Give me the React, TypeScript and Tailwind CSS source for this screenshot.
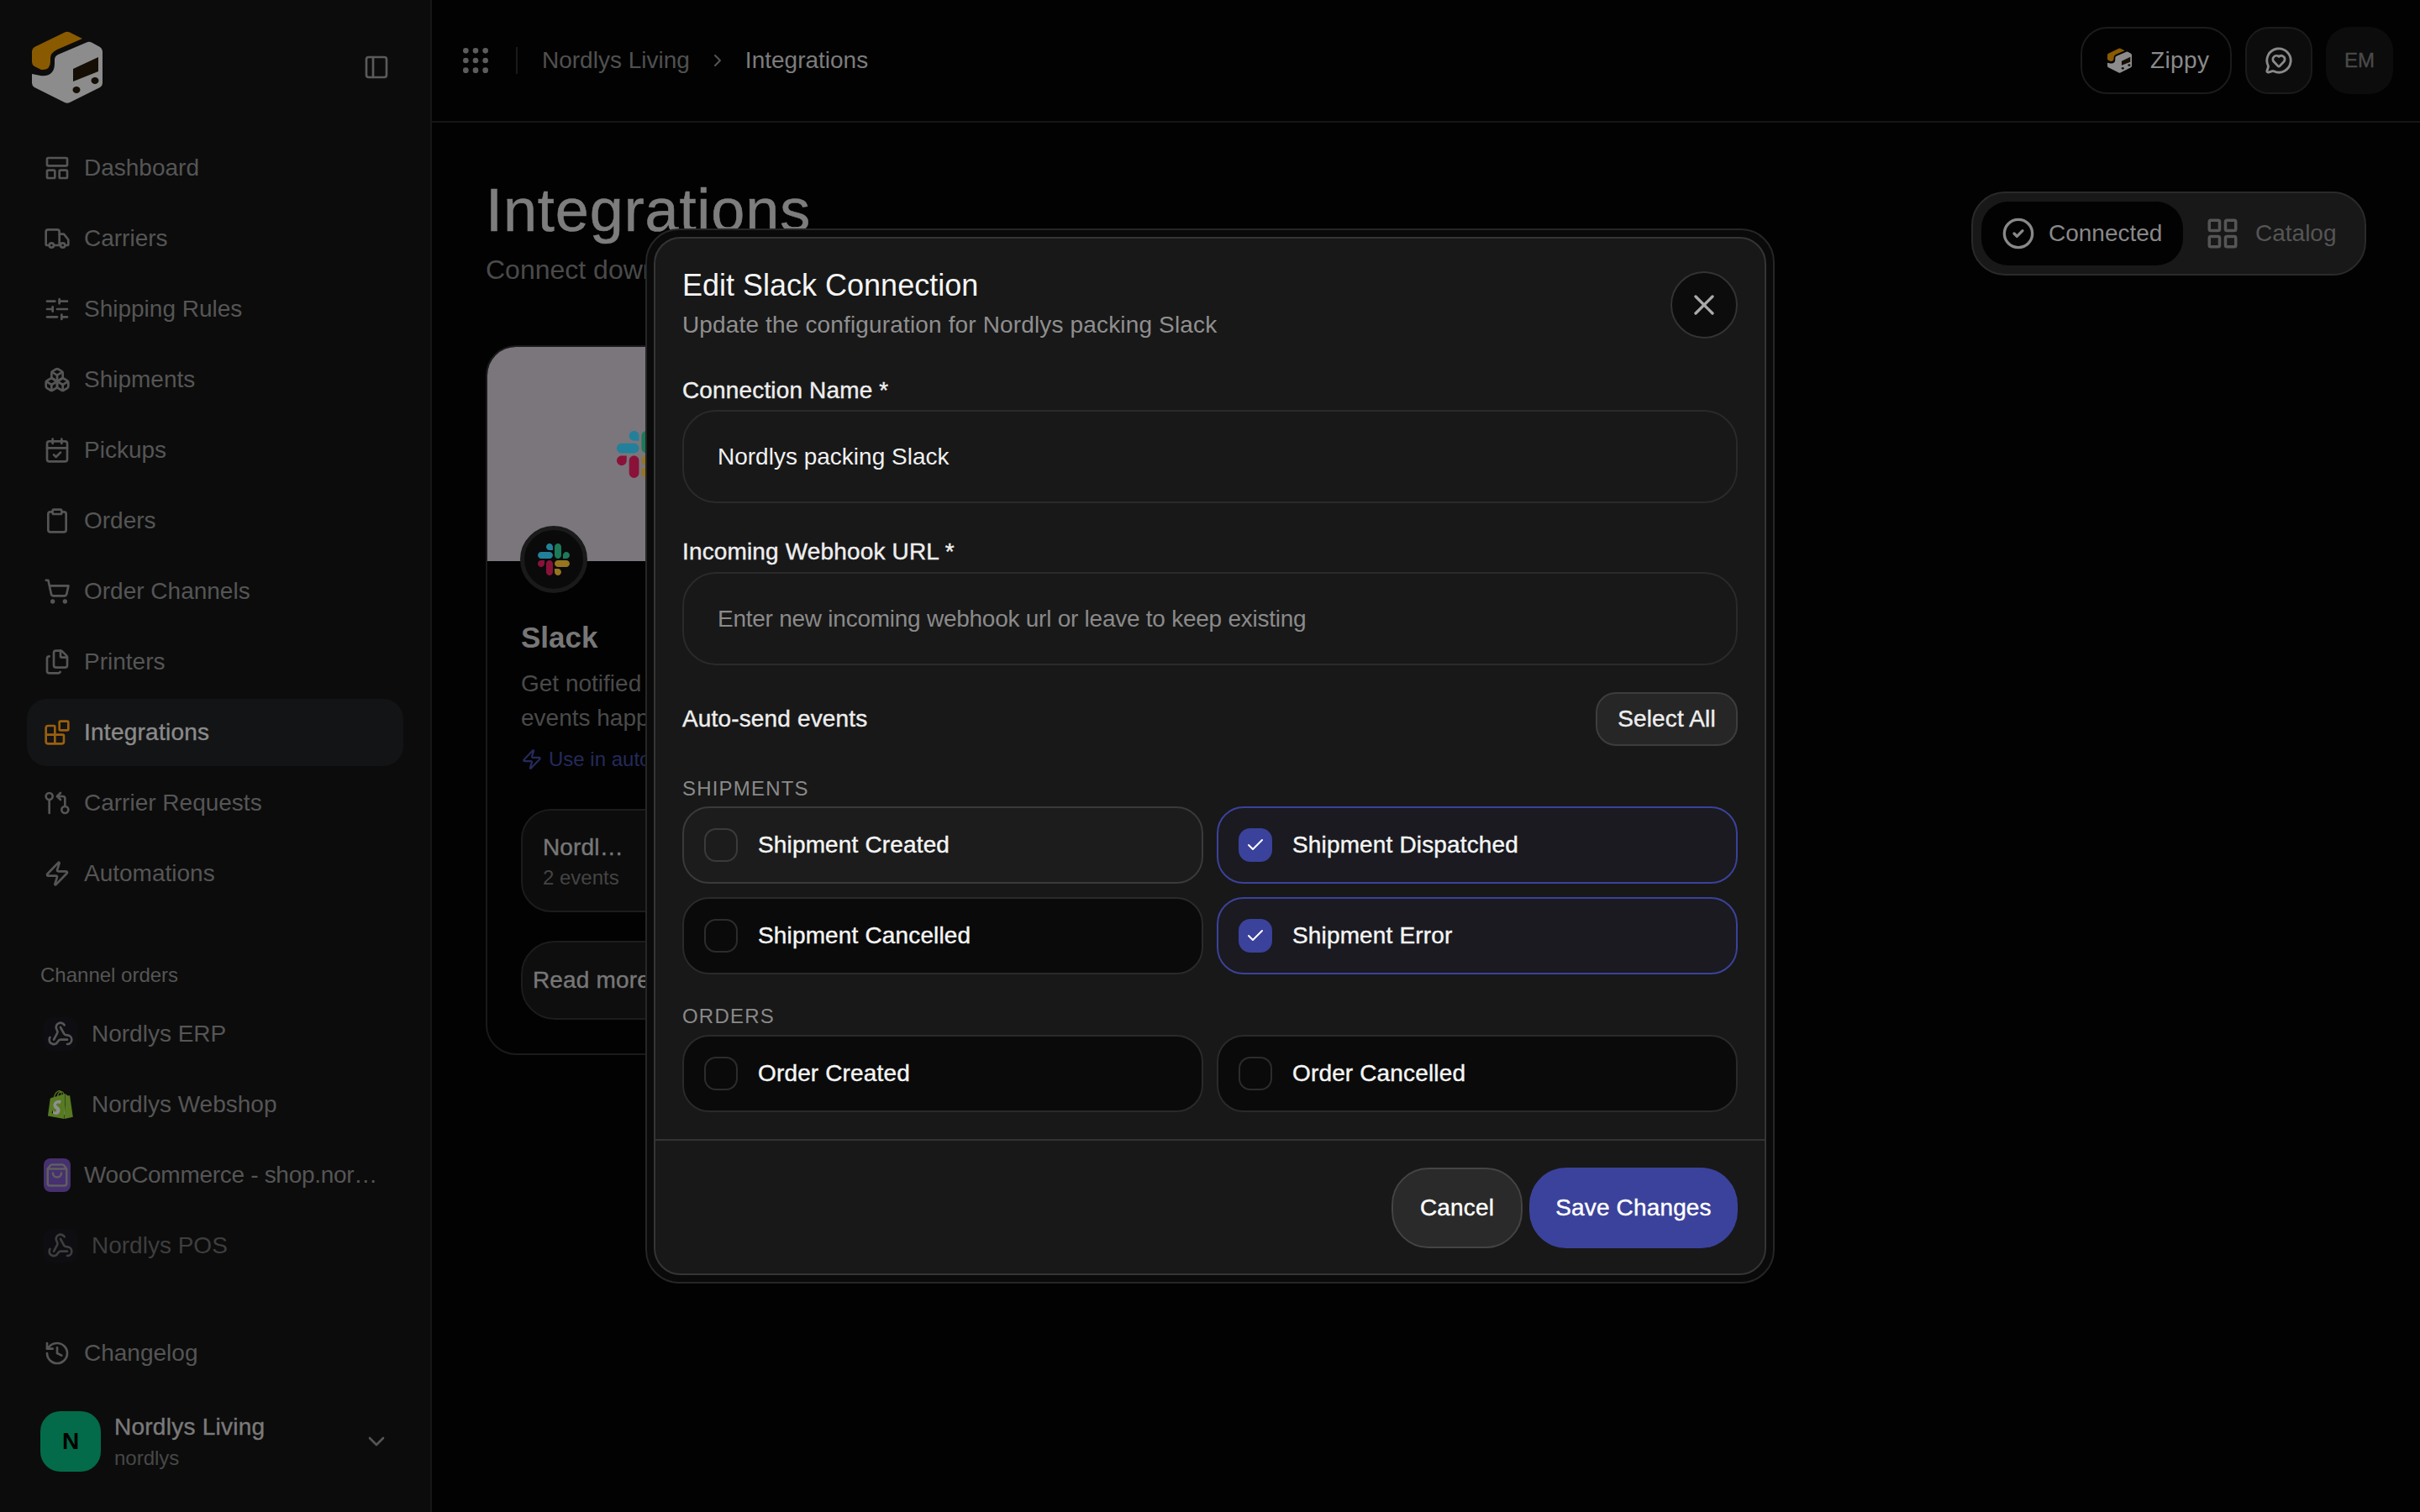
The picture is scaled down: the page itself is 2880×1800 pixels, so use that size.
import {
  Blocks,
  Boxes,
  CalendarCheck,
  Check,
  ChevronDown,
  ChevronRight,
  CircleCheck,
  Clipboard,
  Files,
  GitPullRequestArrow,
  Grip,
  History,
  LayoutGrid,
  LayoutPanelTop,
  MessageCircleHeart,
  PanelLeft,
  ShoppingBag,
  ShoppingCart,
  SlidersHorizontal,
  Truck,
  Webhook,
  X,
  Zap,
} from "lucide-react";
import { SiShopify } from "react-icons/si";

const MEDIUM = "[-webkit-text-stroke:0.4px] tracking-[0.15px]";

const NAV = [
  { label: "Dashboard", icon: LayoutPanelTop },
  { label: "Carriers", icon: Truck },
  { label: "Shipping Rules", icon: SlidersHorizontal },
  { label: "Shipments", icon: Boxes },
  { label: "Pickups", icon: CalendarCheck },
  { label: "Orders", icon: Clipboard },
  { label: "Order Channels", icon: ShoppingCart },
  { label: "Printers", icon: Files },
  { label: "Integrations", icon: Blocks, active: true },
  { label: "Carrier Requests", icon: GitPullRequestArrow },
  { label: "Automations", icon: Zap },
];

function ZippyLogo({ className }: { className: string }) {
  return (
    <svg viewBox="0 0 84 86" className={className}>
      <path
        d="M3 19 39 1.5Q42 0 45 1.5L60 9 30 22Q22 26 22 32V36Q22 47 11 46L3 42Q0 40 0 37V24Q0 21 3 19Z"
        fill="#8a5a00"
      />
      <path
        d="M65 13.5Q68 12 71 13.5L81 19Q84 21 84 24V62Q84 65 81 67L45 85Q42 86.500 39 85L3 67Q0 65 0 62V51L10 53Q27 55 27 38V34Q27 30 31 28Z"
        fill="#8c8c8c"
      />
      <path d="M49 45 79 31V48L49 60Z" fill="#140e04" />
      <ellipse cx="53" cy="70" rx="4.500" ry="4" fill="#140e04" />
      <ellipse cx="75" cy="59" rx="4.500" ry="4" fill="#140e04" />
    </svg>
  );
}

function SlackLogo({ className }: { className: string }) {
  return (
    <svg viewBox="0 0 123 123" className={className}>
      <path d="M25.8 77.6c0 7.1-5.8 12.9-12.9 12.9S0 84.7 0 77.6s5.8-12.9 12.9-12.9h12.9v12.9z" fill="#8a1238" />
      <path d="M32.3 77.6c0-7.1 5.8-12.9 12.9-12.9s12.9 5.8 12.9 12.9v32.3c0 7.1-5.8 12.9-12.9 12.9s-12.9-5.800-12.9-12.9V77.6z" fill="#8a1238" />
      <path d="M45.2 25.8c-7.1 0-12.9-5.8-12.9-12.9S38.1 0 45.2 0s12.9 5.8 12.9 12.9v12.9H45.2z" fill="#23809a" />
      <path d="M45.2 32.3c7.1 0 12.9 5.8 12.9 12.9s-5.800 12.9-12.9 12.9H12.9C5.8 58.1 0 52.3 0 45.2s5.8-12.9 12.9-12.9h32.3z" fill="#23809a" />
      <path d="M97 45.2c0-7.1 5.8-12.9 12.9-12.9s12.9 5.8 12.9 12.9-5.800 12.9-12.9 12.9H97V45.2z" fill="#1d7a58" />
      <path d="M90.5 45.2c0 7.1-5.8 12.9-12.9 12.9s-12.9-5.800-12.9-12.9V12.9C64.7 5.8 70.5 0 77.6 0s12.9 5.8 12.9 12.9v32.3z" fill="#1d7a58" />
      <path d="M77.6 97c7.1 0 12.9 5.8 12.9 12.9s-5.800 12.9-12.9 12.9-12.9-5.800-12.9-12.9V97h12.9z" fill="#967520" />
      <path d="M77.6 90.5c-7.100 0-12.9-5.800-12.9-12.9s5.800-12.9 12.9-12.9h32.3c7.100 0 12.9 5.800 12.9 12.9s-5.800 12.9-12.9 12.9H77.6z" fill="#967520" />
    </svg>
  );
}

function Sidebar() {
  return (
    <aside className="flex h-full w-[514px] shrink-0 flex-col border-r-2 border-[#171717] bg-[#0c0c0c]">
      <div className="flex h-[123px] items-center justify-between pl-[38px] pr-[48px] pt-[37px]">
        <ZippyLogo className="h-[86px] w-[84px]" />
        <PanelLeft size={32} className="text-[#5a5a5a]" />
      </div>

      <nav className="mx-8 mt-[37px] flex flex-col gap-1">
        {NAV.map((item) => (
          <div
            key={item.label}
            className={`flex h-20 items-center gap-4 rounded-3xl px-5 text-[28px] leading-10 ${
              item.active
                ? "bg-[#131415] tracking-[0.25px] text-[#8a8a8a] [-webkit-text-stroke:0.4px]"
                : "text-[#555555]"
            }`}
          >
            <item.icon size={32} className={item.active ? "text-[#9a5f0e]" : "text-[#555555]"} />
            <span>{item.label}</span>
          </div>
        ))}
      </nav>

      <p className="ml-12 mt-[65px] text-2xl leading-8 text-[#555555]">Channel orders</p>

      <div className="mx-8 mt-[14px] flex flex-col gap-1 text-[28px] leading-10">
        <div className="flex h-20 items-center gap-[17px] px-5 text-[#555555]">
          <span className="flex size-10 items-center justify-center rounded-[10px] bg-[#0e0e12]">
            <Webhook size={32} className="text-[#555555]" />
          </span>
          <span>Nordlys ERP</span>
        </div>
        <div className="flex h-20 items-center gap-[17px] px-5 text-[#555555]">
          <span className="relative flex size-10 items-center justify-center">
            <span className="absolute left-[11px] top-[12px] h-[20px] w-[14px] bg-[#8f8f8f]" />
            <SiShopify size={34} className="relative text-[#577a22]" />
          </span>
          <span>Nordlys Webshop</span>
        </div>
        <div className="flex h-20 items-center gap-4 px-5 text-[#555555]">
          <span className="flex h-10 w-8 shrink-0 items-center justify-center rounded-lg bg-[#46306f]">
            <ShoppingBag size={30} className="text-[#5f5f5f]" />
          </span>
          <span className="w-[352px] truncate tracking-[-0.3px]">WooCommerce - shop.nordlys.com</span>
        </div>
        <div className="flex h-20 items-center gap-[17px] px-5 text-[#3e3e3e]">
          <span className="flex size-10 items-center justify-center rounded-[10px] bg-[#0e0e12]">
            <Webhook size={32} className="text-[#3e3e3e]" />
          </span>
          <span>Nordlys POS</span>
        </div>
      </div>

      <div className="mx-8 mt-12 flex h-20 items-center gap-4 px-5 text-[28px] leading-10 text-[#555555]">
        <History size={32} />
        <span>Changelog</span>
      </div>

      <div className="mt-[29px] flex items-center justify-between pl-12 pr-12">
        <div className="flex items-center gap-4">
          <div className="flex size-[72px] items-center justify-center rounded-3xl bg-[#036b49] text-[28px] font-bold text-black">
            N
          </div>
          <div>
            <p className="text-[28px] leading-9 tracking-[0.25px] text-[#7a7a7a] [-webkit-text-stroke:0.4px]">
              Nordlys Living
            </p>
            <p className="mt-[3px] text-2xl leading-8 text-[#474747]">nordlys</p>
          </div>
        </div>
        <ChevronDown size={32} className="text-[#555555]" />
      </div>
    </aside>
  );
}

function TopBar() {
  return (
    <header className="flex h-[146px] items-center justify-between border-b-2 border-[#161616] pl-8 pr-8">
      <div className="flex items-center text-[28px] leading-10">
        <Grip size={40} className="text-[#5c5c5c]" />
        <span className="ml-[28px] h-8 w-[2px] bg-[#1a1a1a]" />
        <span className="ml-[29px] text-[#505050]">Nordlys Living</span>
        <ChevronRight size={24} className="ml-[21px] text-[#555555]" />
        <span className="ml-[21px] text-[#7c7c7c]">Integrations</span>
      </div>
      <div className="flex items-center gap-4">
        <button className="flex h-20 w-[180px] items-center gap-[22px] rounded-[32px] border-2 border-[#1b1b1b] pl-[30px] text-[28px] tracking-[0.4px] text-[#8a8a8a]">
          <ZippyLogo className="h-[30px] w-[29px]" />
          <span>Zippy</span>
        </button>
        <button className="flex size-20 items-center justify-center rounded-[28px] border-2 border-[#1b1b1b] bg-[#0c0c0c]">
          <MessageCircleHeart size={34} className="text-[#8a8a8a]" />
        </button>
        <div className="flex size-20 items-center justify-center rounded-[28px] bg-[#0c0c0c] text-2xl text-[#4a4a4a] [-webkit-text-stroke:0.4px]">
          EM
        </div>
      </div>
    </header>
  );
}

function SlackCard() {
  return (
    <div className="mt-[68px] w-[368px] overflow-hidden rounded-[36px] border-2 border-[#1a1a1a]">
      <div className="relative flex h-[255px] items-center justify-center bg-[#7a767c]">
        <SlackLogo className="size-14" />
        <div className="absolute left-[39px] top-[213px] flex size-20 items-center justify-center rounded-full border-[5px] border-[#1a1a1a] bg-[#0a0a0a]">
          <SlackLogo className="size-[38px]" />
        </div>
      </div>
      <div className="px-10 pb-10">
        <h3 className="mt-[69px] text-[35px] font-bold leading-[44px] text-[#777777]">Slack</h3>
        <p className="mt-3 text-[28px] leading-[41px] text-[#4a4a4a]">Get notified when events happen</p>
        <p className="mt-[11px] flex items-center gap-[7px] text-2xl leading-9 text-[#252a5a]">
          <Zap size={26} />
          Use in automations
        </p>
        <div className="mt-[41px] flex h-[123px] flex-col justify-center rounded-[36px] border-2 border-[#1c1c1c] bg-[#0c0c0c] pl-6">
          <p className={`w-[96px] truncate text-[28px] leading-10 text-[#777777] ${MEDIUM}`}>Nordlys packing Slack</p>
          <p className="text-2xl leading-8 text-[#444444]">2 events</p>
        </div>
        <button className={`mt-[34px] flex h-[94px] w-full items-center rounded-[40px] border-2 border-[#1c1c1c] bg-[#0e0e0e] pl-3 text-[28px] text-[#777777] ${MEDIUM}`}>
          Read more
        </button>
      </div>
    </div>
  );
}

function EventOption({ label, checked, hover }: { label: string; checked?: boolean; hover?: boolean }) {
  const tone = checked
    ? "border-[#3b429b] bg-[#1a1a20]"
    : hover
      ? "border-[#3a3a3a] bg-[#1c1c1c]"
      : "border-[#2a2a2a] bg-[#0a0a0a]";
  return (
    <div className={`flex h-[92px] items-center gap-6 rounded-[32px] border-2 pl-6 ${tone}`}>
      {checked ? (
        <span className="flex size-10 items-center justify-center rounded-[14px] bg-[#3b429b]">
          <Check size={24} className="text-white" />
        </span>
      ) : (
        <span className={`size-10 rounded-[14px] border-2 ${hover ? "border-[#3a3a3a]" : "border-[#2c2c2c]"}`} />
      )}
      <span className={`text-[28px] text-[#f5f5f5] ${MEDIUM}`}>{label}</span>
    </div>
  );
}

function EditModal() {
  return (
    <div className="absolute inset-0 flex items-center justify-center">
      <div className="w-[1344px] rounded-[40px] border-2 border-[#262626] bg-[#0a0a0a] p-2">
        <div className="rounded-[32px] border-2 border-[#353535] bg-[#181818]">
          <div className="px-8 pt-[34px]">
            <div className="flex items-center justify-between">
              <div>
                <h2 className="text-4xl leading-[44px] text-[#f5f5f5]">Edit Slack Connection</h2>
                <p className="mt-[5px] text-[28px] leading-10 tracking-[0.15px] text-[#8f8f8f]">
                  Update the configuration for Nordlys packing Slack
                </p>
              </div>
              <button className="flex size-20 items-center justify-center rounded-full border-2 border-[#333333] bg-[#0c0c0c]">
                <X size={40} className="text-[#aaaaaa]" />
              </button>
            </div>

            <label className={`mt-[38px] block text-[28px] leading-10 text-[#eeeeee] ${MEDIUM}`}>
              Connection Name *
            </label>
            <div className="mt-[3px] flex h-[111px] items-center rounded-[40px] border-2 border-[#2a2a2a] pl-10 text-[28px] text-[#f0f0f0]">
              Nordlys packing Slack
            </div>

            <label className={`mt-[38px] block text-[28px] leading-10 text-[#eeeeee] ${MEDIUM}`}>
              Incoming Webhook URL *
            </label>
            <div className="mt-1 flex h-[111px] items-center rounded-[40px] border-2 border-[#2a2a2a] pl-10 text-[28px] tracking-[-0.25px] text-[#8a8a8a]">
              Enter new incoming webhook url or leave to keep existing
            </div>

            <div className="mt-8 flex items-center justify-between">
              <span className={`text-[28px] text-[#eeeeee] ${MEDIUM}`}>Auto-send events</span>
              <button className={`h-16 w-[169px] rounded-3xl border-2 border-[#3d3d3d] bg-[#262626] text-[28px] text-[#eeeeee] ${MEDIUM}`}>
                Select All
              </button>
            </div>

            <p className="mt-[35px] text-2xl uppercase leading-8 tracking-[1.2px] text-[#8a8a8a]">Shipments</p>
            <div className="mt-[5px] grid grid-cols-2 gap-4">
              <EventOption label="Shipment Created" hover />
              <EventOption label="Shipment Dispatched" checked />
              <EventOption label="Shipment Cancelled" />
              <EventOption label="Shipment Error" checked />
            </div>

            <p className="mt-[34px] text-2xl uppercase leading-8 tracking-[1.2px] text-[#8a8a8a]">Orders</p>
            <div className="mt-[6px] grid grid-cols-2 gap-4">
              <EventOption label="Order Created" />
              <EventOption label="Order Cancelled" />
            </div>
          </div>

          <div className="mt-8 flex justify-end gap-2 border-t-2 border-[#333333] px-8 pb-[30px] pt-8">
            <button className={`h-24 w-[156px] rounded-[44px] border-2 border-[#444444] bg-[#2a2a2a] text-[28px] text-white ${MEDIUM}`}>
              Cancel
            </button>
            <button className={`h-24 w-[248px] rounded-[44px] bg-[#3b429b] text-[28px] text-white ${MEDIUM}`}>
              Save Changes
            </button>
          </div>
        </div>
      </div>
    </div>
  );
}

export default function App() {
  return (
    <div className="relative flex h-screen w-screen overflow-hidden bg-[#020202] font-['Liberation_Sans',Arial,sans-serif]">
      <Sidebar />
      <main className="min-w-0 flex-1">
        <TopBar />
        <div className="px-16 pt-[64px]">
          <div className="flex items-start justify-between">
            <div>
              <h1 className="text-[72px] leading-20 tracking-[0.9px] text-[#7d7d7d] [-webkit-text-stroke:0.6px]">
                Integrations
              </h1>
              <p className="mt-[9px] text-[32px] leading-[44px] text-[#4a4a4a]">Connect downstream services</p>
            </div>
            <div className="mt-[18px] flex h-[100px] w-[470px] items-center rounded-[40px] border-2 border-[#2a2a2a] bg-[#181818] pl-[10px] text-[28px]">
              <div className="flex h-[76px] w-[240px] items-center gap-4 rounded-[32px] bg-[#020202] pl-[24px] text-[#888888]">
                <CircleCheck size={40} />
                <span>Connected</span>
              </div>
              <div className="ml-[26px] flex items-center gap-[18px] text-[#555555]">
                <LayoutGrid size={42} />
                <span>Catalog</span>
              </div>
            </div>
          </div>
          <SlackCard />
        </div>
      </main>
      <EditModal />
    </div>
  );
}
